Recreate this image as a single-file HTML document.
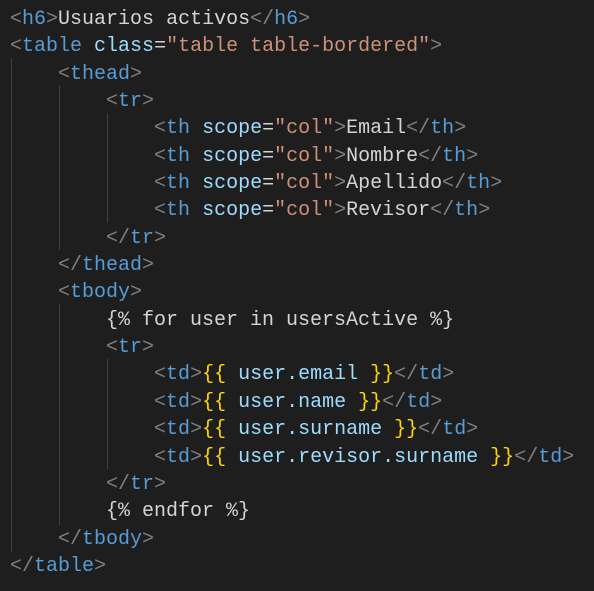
<!DOCTYPE html><html><head><style>
body{margin:0;background:#1e1e1e;width:594px;height:591px;overflow:hidden;position:relative}
pre{margin:0;position:absolute;left:10px;top:6px;font:20px/27.35px "Liberation Mono",monospace;color:#d4d4d4}
.p{color:#808080}.t{color:#569cd6}.a{color:#9cdcfe}.s{color:#ce9178}.b{color:#ffd700}
.g{position:absolute;width:1px;background:#404040}
</style></head><body>
<div class="g" style="left:11px;top:58px;height:494px"></div>
<div class="g" style="left:59px;top:85px;height:165px"></div>
<div class="g" style="left:59px;top:304px;height:221px"></div>
<div class="g" style="left:107px;top:113px;height:110px"></div>
<div class="g" style="left:107px;top:359px;height:110px"></div>
<pre><span class="p">&lt;</span><span class="t">h6</span><span class="p">&gt;</span>Usuarios activos<span class="p">&lt;/</span><span class="t">h6</span><span class="p">&gt;</span>
<span class="p">&lt;</span><span class="t">table</span> <span class="a">class</span>=<span class="s">"table table-bordered"</span><span class="p">&gt;</span>
    <span class="p">&lt;</span><span class="t">thead</span><span class="p">&gt;</span>
        <span class="p">&lt;</span><span class="t">tr</span><span class="p">&gt;</span>
            <span class="p">&lt;</span><span class="t">th</span> <span class="a">scope</span>=<span class="s">"col"</span><span class="p">&gt;</span>Email<span class="p">&lt;/</span><span class="t">th</span><span class="p">&gt;</span>
            <span class="p">&lt;</span><span class="t">th</span> <span class="a">scope</span>=<span class="s">"col"</span><span class="p">&gt;</span>Nombre<span class="p">&lt;/</span><span class="t">th</span><span class="p">&gt;</span>
            <span class="p">&lt;</span><span class="t">th</span> <span class="a">scope</span>=<span class="s">"col"</span><span class="p">&gt;</span>Apellido<span class="p">&lt;/</span><span class="t">th</span><span class="p">&gt;</span>
            <span class="p">&lt;</span><span class="t">th</span> <span class="a">scope</span>=<span class="s">"col"</span><span class="p">&gt;</span>Revisor<span class="p">&lt;/</span><span class="t">th</span><span class="p">&gt;</span>
        <span class="p">&lt;/</span><span class="t">tr</span><span class="p">&gt;</span>
    <span class="p">&lt;/</span><span class="t">thead</span><span class="p">&gt;</span>
    <span class="p">&lt;</span><span class="t">tbody</span><span class="p">&gt;</span>
        {% for user in usersActive %}
        <span class="p">&lt;</span><span class="t">tr</span><span class="p">&gt;</span>
            <span class="p">&lt;</span><span class="t">td</span><span class="p">&gt;</span><span class="b">{{</span> <span class="a">user.email</span> <span class="b">}}</span><span class="p">&lt;/</span><span class="t">td</span><span class="p">&gt;</span>
            <span class="p">&lt;</span><span class="t">td</span><span class="p">&gt;</span><span class="b">{{</span> <span class="a">user.name</span> <span class="b">}}</span><span class="p">&lt;/</span><span class="t">td</span><span class="p">&gt;</span>
            <span class="p">&lt;</span><span class="t">td</span><span class="p">&gt;</span><span class="b">{{</span> <span class="a">user.surname</span> <span class="b">}}</span><span class="p">&lt;/</span><span class="t">td</span><span class="p">&gt;</span>
            <span class="p">&lt;</span><span class="t">td</span><span class="p">&gt;</span><span class="b">{{</span> <span class="a">user.revisor.surname</span> <span class="b">}}</span><span class="p">&lt;/</span><span class="t">td</span><span class="p">&gt;</span>
        <span class="p">&lt;/</span><span class="t">tr</span><span class="p">&gt;</span>
        {% endfor %}
    <span class="p">&lt;/</span><span class="t">tbody</span><span class="p">&gt;</span>
<span class="p">&lt;/</span><span class="t">table</span><span class="p">&gt;</span></pre>
</body></html>
